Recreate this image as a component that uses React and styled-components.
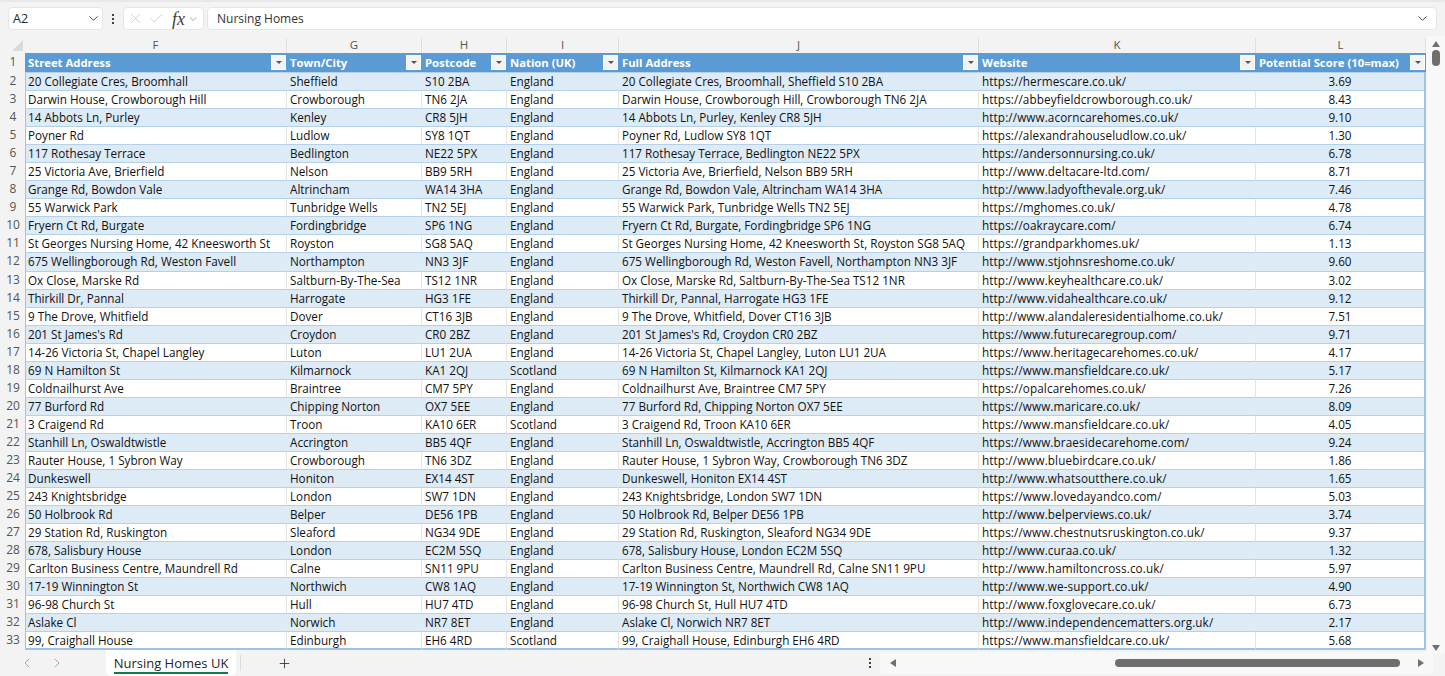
import styled, { createGlobalStyle } from "styled-components";
import { ChevronDown, ChevronLeft, ChevronRight, Plus, X, Check } from "lucide-react";

const columns = [
  { letter: "F", width: 262, title: "Street Address" },
  { letter: "G", width: 135, title: "Town/City" },
  { letter: "H", width: 85, title: "Postcode" },
  { letter: "I", width: 112, title: "Nation (UK)" },
  { letter: "J", width: 360, title: "Full Address" },
  { letter: "K", width: 277, title: "Website" },
  { letter: "L", width: 170, title: "Potential Score (10=max)" },
];

const rows = [
  ["20 Collegiate Cres, Broomhall", "Sheffield", "S10 2BA", "England", "https://hermescare.co.uk/", "3.69"],
  ["Darwin House, Crowborough Hill", "Crowborough", "TN6 2JA", "England", "https://abbeyfieldcrowborough.co.uk/", "8.43"],
  ["14 Abbots Ln, Purley", "Kenley", "CR8 5JH", "England", "http://www.acorncarehomes.co.uk/", "9.10"],
  ["Poyner Rd", "Ludlow", "SY8 1QT", "England", "https://alexandrahouseludlow.co.uk/", "1.30"],
  ["117 Rothesay Terrace", "Bedlington", "NE22 5PX", "England", "https://andersonnursing.co.uk/", "6.78"],
  ["25 Victoria Ave, Brierfield", "Nelson", "BB9 5RH", "England", "http://www.deltacare-ltd.com/", "8.71"],
  ["Grange Rd, Bowdon Vale", "Altrincham", "WA14 3HA", "England", "http://www.ladyofthevale.org.uk/", "7.46"],
  ["55 Warwick Park", "Tunbridge Wells", "TN2 5EJ", "England", "https://mghomes.co.uk/", "4.78"],
  ["Fryern Ct Rd, Burgate", "Fordingbridge", "SP6 1NG", "England", "https://oakraycare.com/", "6.74"],
  ["St Georges Nursing Home, 42 Kneesworth St", "Royston", "SG8 5AQ", "England", "https://grandparkhomes.uk/", "1.13"],
  ["675 Wellingborough Rd, Weston Favell", "Northampton", "NN3 3JF", "England", "http://www.stjohnsreshome.co.uk/", "9.60"],
  ["Ox Close, Marske Rd", "Saltburn-By-The-Sea", "TS12 1NR", "England", "http://www.keyhealthcare.co.uk/", "3.02"],
  ["Thirkill Dr, Pannal", "Harrogate", "HG3 1FE", "England", "http://www.vidahealthcare.co.uk/", "9.12"],
  ["9 The Drove, Whitfield", "Dover", "CT16 3JB", "England", "http://www.alandaleresidentialhome.co.uk/", "7.51"],
  ["201 St James's Rd", "Croydon", "CR0 2BZ", "England", "https://www.futurecaregroup.com/", "9.71"],
  ["14-26 Victoria St, Chapel Langley", "Luton", "LU1 2UA", "England", "https://www.heritagecarehomes.co.uk/", "4.17"],
  ["69 N Hamilton St", "Kilmarnock", "KA1 2QJ", "Scotland", "https://www.mansfieldcare.co.uk/", "5.17"],
  ["Coldnailhurst Ave", "Braintree", "CM7 5PY", "England", "https://opalcarehomes.co.uk/", "7.26"],
  ["77 Burford Rd", "Chipping Norton", "OX7 5EE", "England", "https://www.maricare.co.uk/", "8.09"],
  ["3 Craigend Rd", "Troon", "KA10 6ER", "Scotland", "https://www.mansfieldcare.co.uk/", "4.05"],
  ["Stanhill Ln, Oswaldtwistle", "Accrington", "BB5 4QF", "England", "https://www.braesidecarehome.com/", "9.24"],
  ["Rauter House, 1 Sybron Way", "Crowborough", "TN6 3DZ", "England", "http://www.bluebirdcare.co.uk/", "1.86"],
  ["Dunkeswell", "Honiton", "EX14 4ST", "England", "http://www.whatsoutthere.co.uk/", "1.65"],
  ["243 Knightsbridge", "London", "SW7 1DN", "England", "https://www.lovedayandco.com/", "5.03"],
  ["50 Holbrook Rd", "Belper", "DE56 1PB", "England", "http://www.belperviews.co.uk/", "3.74"],
  ["29 Station Rd, Ruskington", "Sleaford", "NG34 9DE", "England", "https://www.chestnutsruskington.co.uk/", "9.37"],
  ["678, Salisbury House", "London", "EC2M 5SQ", "England", "http://www.curaa.co.uk/", "1.32"],
  ["Carlton Business Centre, Maundrell Rd", "Calne", "SN11 9PU", "England", "http://www.hamiltoncross.co.uk/", "5.97"],
  ["17-19 Winnington St", "Northwich", "CW8 1AQ", "England", "http://www.we-support.co.uk/", "4.90"],
  ["96-98 Church St", "Hull", "HU7 4TD", "England", "http://www.foxglovecare.co.uk/", "6.73"],
  ["Aslake Cl", "Norwich", "NR7 8ET", "England", "http://www.independencematters.org.uk/", "2.17"],
  ["99, Craighall House", "Edinburgh", "EH6 4RD", "Scotland", "https://www.mansfieldcare.co.uk/", "5.68"],
];

const GlobalStyle = createGlobalStyle`
  html, body {
    margin: 0;
    height: 100%;
    overflow: hidden;
    background: #f3f3f3;
    font-family: "Open Sans", "Noto Sans", sans-serif;
    color: #262626;
  }
`;

const Page = styled.div`
  width: 1445px;
  height: 676px;
  display: flex;
  flex-direction: column;
  overflow: hidden;
  border-top: 2px solid #e8e8e8;
  box-sizing: border-box;
`;

const FormulaBar = styled.div`
  height: 36px;
  flex: none;
  box-sizing: border-box;
  padding: 5px 8px 8px 8px;
  display: flex;
  align-items: stretch;
`;

const Pill = styled.div`
  background: #ffffff;
  border: 1px solid #e6e6e6;
  border-radius: 4px;
  box-sizing: border-box;
  display: flex;
  align-items: center;
`;

const NameBox = styled(Pill)`
  width: 95px;
  padding: 0 0 0 4px;
  font-size: 12.5px;
  justify-content: space-between;
  color: #262626;
  svg {
    margin-right: 1px;
  }
`;

const Dots = styled.div`
  width: 20px;
  display: flex;
  flex-direction: column;
  align-items: center;
  justify-content: center;
  gap: 2px;
  i {
    width: 2px;
    height: 2px;
    background: #404040;
  }
`;

const FxBox = styled(Pill)`
  width: 81px;
  margin-right: 3px;
  padding-left: 3px;
  gap: 4px;
  color: #c0c0c0;
`;

const FxMark = styled.span`
  font-family: "Liberation Serif", serif;
  font-style: italic;
  font-size: 18px;
  line-height: 18px;
  color: #404040;
  margin: 0 -2px 0 3px;
`;

const FormulaInput = styled(Pill)`
  flex: 1;
  padding: 0 6px 0 9px;
  font-size: 12px;
  justify-content: space-between;
  color: #333;
`;

const Grid = styled.div`
  flex: 1;
  display: flex;
  min-height: 0;
`;

const Sheet = styled.div`
  width: 1426px;
  display: flex;
  flex-direction: column;
`;

const ColumnHeaderRow = styled.div`
  height: 15px;
  flex: none;
  display: flex;
`;

const Corner = styled.div`
  width: 25px;
  flex: none;
  display: flex;
  justify-content: flex-end;
  align-items: flex-end;
  padding: 0 2px 2px 0;
  box-sizing: border-box;
  &::after {
    content: "";
    border-style: solid;
    border-width: 0 0 11px 11px;
    border-color: transparent transparent #dadada transparent;
  }
`;

const ColumnLetter = styled.div`
  width: ${(p) => p.$width}px;
  flex: none;
  box-sizing: border-box;
  border-right: 1px solid #e0e0e0;
  text-align: center;
  font-size: 11.5px;
  line-height: 13px;
  color: #555;
`;

const Row = styled.div`
  height: ${(p) => (p.$header ? "19px" : "18.06px")};
  display: flex;
  flex: none;
`;

const RowNumber = styled.div`
  width: 25px;
  flex: none;
  font-size: 12px;
  text-align: center;
  color: #555;
  line-height: 17px;
  padding-left: 1px;
  box-sizing: border-box;
`;

const Cell = styled.div`
  width: ${(p) => p.$width}px;
  flex: none;
  box-sizing: border-box;
  padding: 0 3px 0 ${(p) => (p.$first ? "2px" : "3px")};
  font-size: 11.7px;
  line-height: 17px;
  white-space: nowrap;
  overflow: hidden;
  color: #111111;
  letter-spacing: ${(p) => (p.$url ? "0.12px" : "0")};
  text-align: ${(p) => (p.$center ? "center" : "left")};
  background: ${(p) => (p.$striped ? "#ddebf7" : "#ffffff")};
  border-top: 1px solid #b4d0ea;
  border-right: 1px solid ${(p) => (p.$striped ? "#ddebf7" : "#e4e4e4")};
  ${(p) => p.$first && "border-left: 1px solid #9dc3e6;"}
  ${(p) => p.$last && "border-right: 2px solid #9dc3e6;"}
  ${(p) => p.$bottom && "height: 19px; border-bottom: 2px solid #9dc3e6;"}
`;

const HeaderCell = styled.div`
  width: ${(p) => p.$width}px;
  flex: none;
  box-sizing: border-box;
  background: #5b9bd5;
  color: #ffffff;
  font-size: 11.3px;
  font-weight: 700;
  display: flex;
  align-items: center;
  justify-content: space-between;
  padding: 1px 1px 1px 3px;
  white-space: nowrap;
  line-height: 15px;
`;

const FilterButton = styled.span`
  width: 15px;
  height: 15px;
  background: #f2f2f2;
  border: 1px solid #ffffff;
  box-sizing: border-box;
  display: flex;
  align-items: center;
  justify-content: center;
  &::after {
    content: "";
    border-style: solid;
    border-width: 3px 3px 0 3px;
    border-color: #555 transparent transparent transparent;
  }
`;

const VerticalScroll = styled.div`
  width: 19px;
  height: 618px;
  background: #f8f8f8;
  border-radius: 0 0 4px 4px;
  display: flex;
  flex-direction: column;
  align-items: center;
  padding-top: 2px;
  box-sizing: border-box;
  margin-top: -2px;
`;

const ArrowUp = styled.span`
  border-style: solid;
  border-width: 0 4.5px 6px 4.5px;
  border-color: transparent transparent #707070 transparent;
  margin: 3px 0 3px;
`;

const ArrowDown = styled.span`
  border-style: solid;
  border-width: 6px 4.5px 0 4.5px;
  border-color: #707070 transparent transparent transparent;
  margin-top: auto;
  margin-bottom: 3px;
`;

const VThumb = styled.div`
  width: 8px;
  height: 16px;
  border-radius: 4px;
  background: #6e6e6e;
`;

const BottomBar = styled.div`
  height: 26px;
  display: flex;
  align-items: center;
  flex: none;
`;

const NavArrows = styled.div`
  width: 106px;
  display: flex;
  padding-left: 19px;
  gap: 14px;
  box-sizing: border-box;
  color: #a6a6a6;
`;

const SheetTab = styled.div`
  width: 130px;
  height: 26px;
  box-sizing: border-box;
  background: #ffffff;
  border-radius: 0 0 5px 5px;
  display: flex;
  flex-direction: column;
  align-items: center;
  padding-top: 4px;
  font-size: 13px;
  font-weight: 500;
  line-height: 18px;
  color: #262626;
  span {
    border-bottom: 2px solid #107c41;
  }
`;

const AddSheet = styled.div`
  margin-left: 4px;
  padding-left: 36px;
  width: 60px;
  height: 16px;
  border-left: 1px solid #dcdcdc;
  display: flex;
  align-items: center;
  color: #404040;
  box-sizing: border-box;
  flex: none;
`;

const Spacer = styled.div`
  flex: 1;
`;

const HScroll = styled.div`
  width: 553px;
  height: 22px;
  margin-right: 12px;
  background: #f8f8f8;
  border-radius: 4px;
  display: flex;
  align-items: center;
  padding: 0 9px 0 10px;
  box-sizing: border-box;
`;

const ArrowLeft = styled.span`
  border-style: solid;
  border-width: 4.5px 6px 4.5px 0;
  border-color: transparent #707070 transparent transparent;
`;

const ArrowRight = styled.span`
  border-style: solid;
  border-width: 4.5px 0 4.5px 6px;
  border-color: transparent transparent transparent #707070;
  margin-left: auto;
`;

const HThumb = styled.div`
  width: 285px;
  height: 8px;
  margin-left: 219px;
  border-radius: 4px;
  background: #6e6e6e;
`;

function App() {
  return (
    <Page>
      <GlobalStyle />
      <FormulaBar>
        <NameBox>
          A2
          <ChevronDown size={15} color="#404040" strokeWidth={1.5} />
        </NameBox>
        <Dots>
          <i />
          <i />
          <i />
        </Dots>
        <FxBox>
          <X size={17} strokeWidth={1} />
          <Check size={17} strokeWidth={1} />
          <FxMark>fx</FxMark>
          <ChevronDown size={12} color="#888" strokeWidth={1.5} />
        </FxBox>
        <FormulaInput>
          Nursing Homes
          <ChevronDown size={15} color="#404040" strokeWidth={1.5} />
        </FormulaInput>
      </FormulaBar>
      <Grid>
        <Sheet>
          <ColumnHeaderRow>
            <Corner />
            {columns.map((c) => (
              <ColumnLetter key={c.letter} $width={c.width}>
                {c.letter}
              </ColumnLetter>
            ))}
          </ColumnHeaderRow>
          <Row $header>
            <RowNumber>1</RowNumber>
            {columns.map((c) => (
              <HeaderCell key={c.letter} $width={c.width}>
                {c.title}
                <FilterButton />
              </HeaderCell>
            ))}
          </Row>
          {rows.map((r, i) => {
            const striped = i % 2 === 0;
            const bottom = i === rows.length - 1;
            const full = `${r[0]}, ${r[1]} ${r[2]}`;
            const values = [r[0], r[1], r[2], r[3], full, r[4], r[5]];
            return (
              <Row key={r[0]}>
                <RowNumber>{i + 2}</RowNumber>
                {values.map((v, j) => (
                  <Cell
                    key={columns[j].letter}
                    $width={columns[j].width}
                    $striped={striped}
                    $first={j === 0}
                    $last={j === 6}
                    $center={j === 6}
                    $url={j === 5}
                    $bottom={bottom}
                  >
                    {v}
                  </Cell>
                ))}
              </Row>
            );
          })}
        </Sheet>
        <VerticalScroll>
          <ArrowUp />
          <VThumb />
          <ArrowDown />
        </VerticalScroll>
      </Grid>
      <BottomBar>
        <NavArrows>
          <ChevronLeft size={16} strokeWidth={1.5} />
          <ChevronRight size={16} strokeWidth={1.5} />
        </NavArrows>
        <SheetTab>
          <span>Nursing Homes UK</span>
        </SheetTab>
        <AddSheet>
          <Plus size={15} strokeWidth={1.5} />
        </AddSheet>
        <Spacer />
        <Dots>
          <i />
          <i />
          <i />
        </Dots>
        <HScroll>
          <ArrowLeft />
          <HThumb />
          <ArrowRight />
        </HScroll>
      </BottomBar>
    </Page>
  );
}

export default App;
